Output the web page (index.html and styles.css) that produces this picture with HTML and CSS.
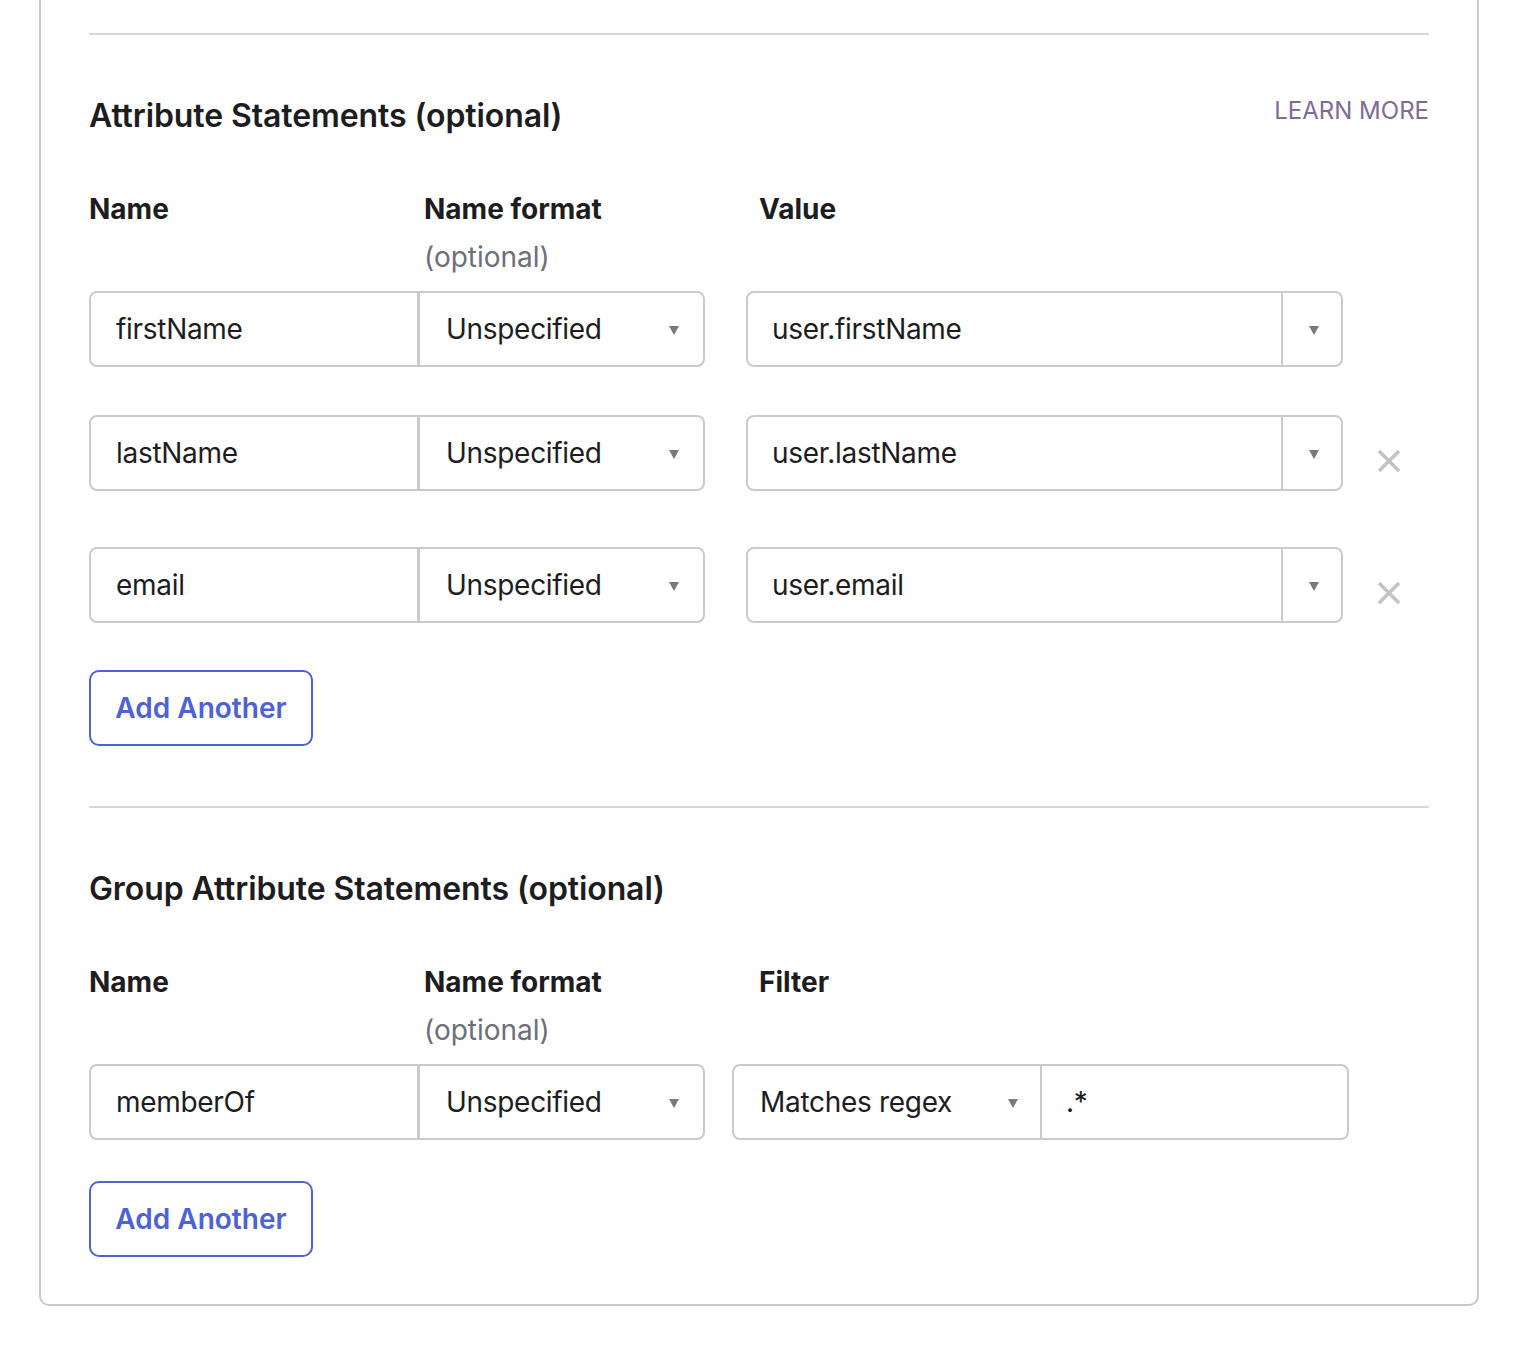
FILE: index.html
```html
<!DOCTYPE html>
<html lang="en">
<head>
<meta charset="utf-8">
<title>Attribute Statements</title>
<link rel="stylesheet" href="styles.css">
</head>
<body>
<div class="page">
  <div class="card">
    <div class="divider"></div>

    <div class="section-head">
      <h2 class="section-title">Attribute Statements (optional)</h2>
      <a class="learn-more" href="#">LEARN MORE</a>
    </div>

    <div class="labels">
      <div class="label-col">Name</div>
      <div class="label-col">Name format<div class="label-opt">(optional)</div></div>
      <div class="label-col">Value</div>
    </div>

    <div class="rows">
      <div class="row">
        <div class="pair">
          <div class="field name-field">firstName</div>
          <div class="field format-field"><span>Unspecified</span><svg class="caret" width="10" height="9" viewBox="0 0 10 9"><polygon points="0,0 10,0 5,9"/></svg></div>
        </div>
        <div class="field value-field"><span class="value-text">user.firstName</span><span class="value-toggle"><svg class="caret" width="10" height="9" viewBox="0 0 10 9"><polygon points="0,0 10,0 5,9"/></svg></span></div>
      </div>

      <div class="row">
        <div class="pair">
          <div class="field name-field">lastName</div>
          <div class="field format-field"><span>Unspecified</span><svg class="caret" width="10" height="9" viewBox="0 0 10 9"><polygon points="0,0 10,0 5,9"/></svg></div>
        </div>
        <div class="field value-field"><span class="value-text">user.lastName</span><span class="value-toggle"><svg class="caret" width="10" height="9" viewBox="0 0 10 9"><polygon points="0,0 10,0 5,9"/></svg></span></div>
        <button class="remove" type="button" aria-label="Remove"><svg width="24" height="24" viewBox="0 0 24 24"><path d="M2 2 L22 22 M22 2 L2 22"/></svg></button>
      </div>

      <div class="row">
        <div class="pair">
          <div class="field name-field">email</div>
          <div class="field format-field"><span>Unspecified</span><svg class="caret" width="10" height="9" viewBox="0 0 10 9"><polygon points="0,0 10,0 5,9"/></svg></div>
        </div>
        <div class="field value-field"><span class="value-text">user.email</span><span class="value-toggle"><svg class="caret" width="10" height="9" viewBox="0 0 10 9"><polygon points="0,0 10,0 5,9"/></svg></span></div>
        <button class="remove" type="button" aria-label="Remove"><svg width="24" height="24" viewBox="0 0 24 24"><path d="M2 2 L22 22 M22 2 L2 22"/></svg></button>
      </div>
    </div>

    <button class="add-btn add-first" type="button">Add Another</button>

    <div class="divider divider-second"></div>

    <div class="section-head">
      <h2 class="section-title">Group Attribute Statements (optional)</h2>
    </div>

    <div class="labels">
      <div class="label-col">Name</div>
      <div class="label-col">Name format<div class="label-opt">(optional)</div></div>
      <div class="label-col">Filter</div>
    </div>

    <div class="rows">
      <div class="row">
        <div class="pair">
          <div class="field name-field">memberOf</div>
          <div class="field format-field"><span>Unspecified</span><svg class="caret" width="10" height="9" viewBox="0 0 10 9"><polygon points="0,0 10,0 5,9"/></svg></div>
        </div>
        <div class="field filter-field">
          <div class="filter-select"><span>Matches regex</span><svg class="caret" width="10" height="9" viewBox="0 0 10 9"><polygon points="0,0 10,0 5,9"/></svg></div>
          <div class="filter-input">.*</div>
        </div>
      </div>
    </div>

    <button class="add-btn add-second" type="button">Add Another</button>
  </div>
</div>
</body>
</html>
```

FILE: styles.css
```css
* {
  box-sizing: border-box;
}

body {
  margin: 0;
  background: #ffffff;
  color: #1d1d21;
  font-family: Inter, "Noto Sans", "Liberation Sans", sans-serif;
}

.page {
  padding: 0 41px 0 39px;
}

.card {
  margin-top: -40px;
  border: 2px solid #c9c9cc;
  border-radius: 10px;
  padding: 71px 48px 47px;
}

.divider {
  height: 2px;
  background: #d8d8dc;
}

.divider-second {
  margin-top: 60px;
}

.section-head {
  display: flex;
  justify-content: space-between;
  align-items: flex-start;
  margin-top: 61px;
}

.section-title {
  margin: 0;
  font-size: 32px;
  line-height: 40px;
  font-weight: 600;
  letter-spacing: -0.1px;
  color: #1d1d21;
}

.learn-more {
  font-size: 24px;
  line-height: 30px;
  color: #7f6a98;
  text-decoration: none;
}

.labels {
  display: flex;
  margin-top: 49px;
}

.label-col {
  width: 335px;
  font-size: 28px;
  line-height: 48px;
  font-weight: 700;
}

.label-opt {
  font-weight: 400;
  color: #6e6e78;
}

.rows {
  display: flex;
  flex-direction: column;
  gap: 48px;
  margin-top: 10px;
}

.row {
  display: flex;
  align-items: flex-start;
}

.pair {
  display: flex;
  width: 616px;
}

.field {
  height: 76px;
  border: 2px solid #cacaca;
  display: flex;
  align-items: center;
  font-size: 28px;
  letter-spacing: -0.3px;
  color: #1d1d21;
  background: #fff;
}

.name-field {
  width: 331px;
  border-right-width: 3px;
  border-radius: 8px 0 0 8px;
  padding-left: 25px;
}

.format-field {
  flex: 1;
  border-left: none;
  border-radius: 0 8px 8px 0;
  padding: 0 24px 0 26px;
  justify-content: space-between;
}

.caret {
  fill: #7a7a7e;
  flex: none;
  margin-top: 3px;
}

.value-field {
  width: 597px;
  margin-left: 41px;
  border-radius: 8px;
  padding-left: 24px;
}

.value-text {
  flex: 1;
}

.value-toggle {
  width: 60px;
  align-self: stretch;
  border-left: 2px solid #cacaca;
  display: flex;
  align-items: center;
  justify-content: center;
  padding-left: 4px;
}

.remove {
  margin: 8px 0 0 34px;
  width: 24px;
  height: 76px;
  padding: 0;
  border: none;
  background: none;
  display: flex;
  align-items: center;
  justify-content: center;
}

.remove path {
  stroke: #c2c2c8;
  stroke-width: 3.5;
  fill: none;
}

.filter-field {
  width: 617px;
  margin-left: 27px;
  border-radius: 8px;
}

.filter-select {
  width: 306px;
  height: 100%;
  display: flex;
  align-items: center;
  justify-content: space-between;
  padding: 0 22px 0 26px;
}

.filter-input {
  flex: 1;
  height: 100%;
  display: flex;
  align-items: center;
  border-left: 2px solid #cacaca;
  padding-left: 24px;
}

.add-btn {
  display: block;
  width: 224px;
  height: 76px;
  border: 2px solid #4d61d9;
  border-radius: 10px;
  background: #fff;
  color: #4d61d9;
  font-family: Inter, "Noto Sans", "Liberation Sans", sans-serif;
  font-size: 28px;
  font-weight: 600;
  padding: 0;
}

.add-first {
  margin-top: 39px;
}

.add-second {
  margin-top: 41px;
}
```
